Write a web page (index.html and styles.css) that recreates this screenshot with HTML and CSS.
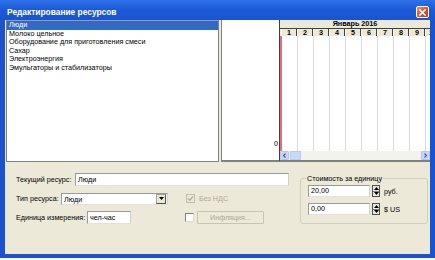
FILE: index.html
```html
<!DOCTYPE html>
<html lang="ru">
<head>
  <meta charset="UTF-8">
  <title>Редактирование ресурсов</title>
  <link rel="stylesheet" href="styles.css">
</head>
<body>

  <div class="window">
    <!-- Заголовок окна -->
    <div class="titlebar">
      <span class="title">Редактирование ресурсов</span>
      <span class="close-btn">
        <svg width="7" height="7" viewBox="0 0 7 7"><path d="M1 1 L6 6 M6 1 L1 6" stroke="#fff" stroke-width="1.6" stroke-linecap="square"/></svg>
      </span>
    </div>

    <div class="client">
      <!-- Список ресурсов + диаграмма -->
      <div class="panes">
        <ul class="res-list">
          <li class="selected">Люди</li>
          <li>Молоко цельное</li>
          <li>Оборудование для приготовления смеси</li>
          <li>Сахар</li>
          <li>Электроэнергия</li>
          <li>Эмульгаторы и стабилизаторы</li>
        </ul>

        <div class="axis"><span>0</span></div>

        <div class="gantt">
          <div class="month">Январь 2016</div>
          <div class="days">
            <span>1</span><span>2</span><span>3</span><span>4</span><span>5</span>
            <span>6</span><span>7</span><span>8</span><span>9</span><span>10</span>
          </div>
          <div class="grid"></div>
          <div class="hscroll">
            <span class="arrow">
              <svg width="5" height="5" viewBox="0 0 5 5"><path d="M3.5 0.5 L1.5 2.5 L3.5 4.5" stroke="#4d6185" stroke-width="1.2" fill="none"/></svg>
            </span>
            <span class="thumb"></span>
            <span class="track"></span>
            <span class="arrow">
              <svg width="5" height="5" viewBox="0 0 5 5"><path d="M1.5 0.5 L3.5 2.5 L1.5 4.5" stroke="#4d6185" stroke-width="1.2" fill="none"/></svg>
            </span>
          </div>
        </div>
      </div>

      <!-- Свойства ресурса -->
      <div class="form">
        <div class="fields">
          <div class="row">
            <label class="lbl-current">Текущий ресурс:</label>
            <div class="input input-current">Люди</div>
          </div>
          <div class="row">
            <label class="lbl-type">Тип ресурса:</label>
            <div class="input select">
              <span>Люди</span>
              <span class="drop">
                <svg width="5" height="3" viewBox="0 0 5 3"><path d="M0 0 H5 L2.5 3 Z" fill="#000"/></svg>
              </span>
            </div>
            <span class="check checked disabled">
              <svg width="7" height="7" viewBox="0 0 7 7"><path d="M1 3.5 L2.8 5.3 L6 1.5" stroke="#b4b09f" stroke-width="1.4" fill="none"/></svg>
            </span>
            <span class="check-text disabled">Без НДС</span>
          </div>
          <div class="row">
            <label class="lbl-unit">Единица измерения:</label>
            <div class="input input-unit">чел-час</div>
            <span class="check check-unit"></span>
            <button class="btn" disabled>Инфляция...</button>
          </div>
        </div>

        <fieldset class="price">
          <legend>Стоимость за единицу</legend>
          <div class="spin-row">
            <div class="input spin-input">20,00</div>
            <span class="spinner">
              <span><svg width="5" height="3" viewBox="0 0 5 3"><path d="M0 3 H5 L2.5 0 Z" fill="#000"/></svg></span>
              <span><svg width="5" height="3" viewBox="0 0 5 3"><path d="M0 0 H5 L2.5 3 Z" fill="#000"/></svg></span>
            </span>
            <span class="unit">руб.</span>
          </div>
          <div class="spin-row">
            <div class="input spin-input">0,00</div>
            <span class="spinner">
              <span><svg width="5" height="3" viewBox="0 0 5 3"><path d="M0 3 H5 L2.5 0 Z" fill="#000"/></svg></span>
              <span><svg width="5" height="3" viewBox="0 0 5 3"><path d="M0 0 H5 L2.5 3 Z" fill="#000"/></svg></span>
            </span>
            <span class="unit">$ US</span>
          </div>
        </fieldset>
      </div>
    </div>
  </div>

</body>
</html>
```

FILE: styles.css
```css
* { margin: 0; padding: 0; box-sizing: border-box; }

body {
  font-family: 'Liberation Sans', Arial, sans-serif;
  font-size: 7.2px;
  background-color: #fff;
  color: #000;
}

.window {
  width: 435px;
  height: 258px;
  display: flex;
  flex-direction: column;
}

/* Title bar */
.titlebar {
  height: 20px;
  flex-shrink: 0;
  display: flex;
  align-items: center;
  justify-content: space-between;
  padding: 4px 6px 0 7px;
  background: linear-gradient(#2f72ea, #1d5ad8 45%, #1a54cf);
  color: white;
  font-size: 8.4px;
  font-weight: bold;
}

.close-btn {
  width: 13px;
  height: 12px;
  display: flex;
  justify-content: center;
  align-items: center;
  border: 1px solid #fff;
  border-radius: 2px;
  background: linear-gradient(135deg, #f0906e, #d9502d 55%, #c23d1d);
}

.client {
  flex: 1;
  display: flex;
  flex-direction: column;
  background-color: #ece9d8;
  border: 5px solid #1a52d0;
  border-top: none;
  border-bottom-width: 4px;
}

/* Panes */
.panes {
  height: 142px;
  display: flex;
  padding-left: 1px;
}

.res-list {
  width: 213px;
  list-style: none;
  background-color: #fff;
  border: 1px solid #808080;
  border-top-color: #9a9a9a;
}

.res-list li {
  height: 8.5px;
  line-height: 8.5px;
  padding-left: 2px;
  white-space: nowrap;
}

.res-list li.selected {
  background-color: #316ac5;
  color: #fff;
}

.axis {
  width: 58px;
  margin-left: 2px;
  display: flex;
  justify-content: flex-end;
  align-items: flex-end;
  padding: 0 1px 12px 0;
  background-color: #fff;
  border-left: 1px solid #808080;
  border-bottom: 2px solid #808080;
}

.gantt {
  width: 151px;
  display: flex;
  flex-direction: column;
  background-color: #fff;
  border-left: 1px solid #404040;
  border-bottom: 2px solid #808080;
}

.month {
  height: 8px;
  line-height: 8px;
  text-align: center;
  font-weight: bold;
  background-color: #ece9d8;
}

.days {
  height: 8px;
  display: flex;
  padding-left: 1px;
  overflow: hidden;
  background-color: #ece9d8;
  border-top: 1px solid #404040;
}

.days span {
  flex: 0 0 16px;
  line-height: 7px;
  text-align: center;
  font-weight: bold;
  border-left: 1px solid #fff;
  border-right: 1px solid #404040;
}

.grid {
  flex: 1;
  border-left: 2px solid #e36c7b;
  background-image: repeating-linear-gradient(90deg, transparent 0 15px, #dcdcdc 15px 16px);
  background-position: 0 0;
}

.hscroll {
  height: 9px;
  display: flex;
  background-color: #f3f3ee;
}

.hscroll .arrow {
  width: 9px;
  display: flex;
  justify-content: center;
  align-items: center;
  background-color: #c8d6f8;
  border: 1px solid #b4c6f2;
  border-radius: 1px;
}

.hscroll .thumb {
  width: 11px;
  margin-left: 1px;
  background-color: #cad8fa;
  border: 1px solid #b8c9f4;
}

.hscroll .track {
  flex: 1;
}

/* Form */
.form {
  flex: 1;
  display: flex;
  padding: 11px 0 0 11px;
}

.fields {
  width: 273px;
  display: flex;
  flex-direction: column;
  gap: 6px;
}

.row {
  height: 13px;
  display: flex;
  align-items: center;
}

.row label {
  flex-shrink: 0;
  white-space: nowrap;
}

.lbl-current { width: 59px; }
.lbl-type { width: 45px; }
.lbl-unit { width: 71px; }

.input {
  height: 13px;
  line-height: 11px;
  padding-left: 2px;
  background-color: #fff;
  border: 1px solid #9a9a9a;
  border-right-color: #d4d0c8;
  border-bottom-color: #e4e2d8;
  white-space: nowrap;
}

.input-current { width: 214px; }

.select {
  width: 107px;
  height: 12px;
  display: flex;
  justify-content: space-between;
}

.select .drop {
  width: 10px;
  margin: 0 1px 0 0;
  display: flex;
  justify-content: center;
  align-items: center;
  background-color: #ece9d8;
  border: 1px solid #a0a0a0;
  border-right-color: #505050;
  border-bottom-color: #505050;
}

.input-unit { width: 44px; }

.check {
  width: 9px;
  height: 9px;
  margin-left: 18px;
  display: flex;
  justify-content: center;
  align-items: center;
  background-color: #fff;
  border: 1px solid #808080;
  border-right-color: #e0ddd0;
  border-bottom-color: #e0ddd0;
}

.check.disabled {
  background-color: #ece9d8;
  border-color: #c0bcae;
}

.check-unit { margin-left: 54px; }

.check-text {
  margin-left: 4px;
}

.disabled {
  color: #aca899;
}

.btn {
  width: 67px;
  height: 13px;
  margin-left: 3px;
  font-family: inherit;
  font-size: 7.2px;
  color: #aca899;
  background-color: #ece9d8;
  border: 1px solid #c8c4b4;
  border-radius: 1px;
}

.price {
  width: 128px;
  height: 50px;
  margin: 1px 0 0 11px;
  padding: 2px 0 0 7px;
  border: 1px solid #d0d0bf;
  border-radius: 3px;
  display: flex;
  flex-direction: column;
  gap: 6px;
}

.price legend {
  margin-left: -2px;
  padding: 0 1px;
  line-height: 9px;
}

.spin-row {
  height: 12px;
  display: flex;
  align-items: center;
}

.spin-input {
  width: 62px;
  height: 12px;
  line-height: 10px;
}

.spinner {
  width: 8px;
  height: 12px;
  margin-left: 2px;
  display: flex;
  flex-direction: column;
  border: 1px solid #505050;
  background-color: #ece9d8;
}

.spinner span {
  flex: 1;
  display: flex;
  justify-content: center;
  align-items: center;
}

.spinner span + span {
  border-top: 1px solid #808080;
}

.unit {
  margin-left: 4px;
}
```
